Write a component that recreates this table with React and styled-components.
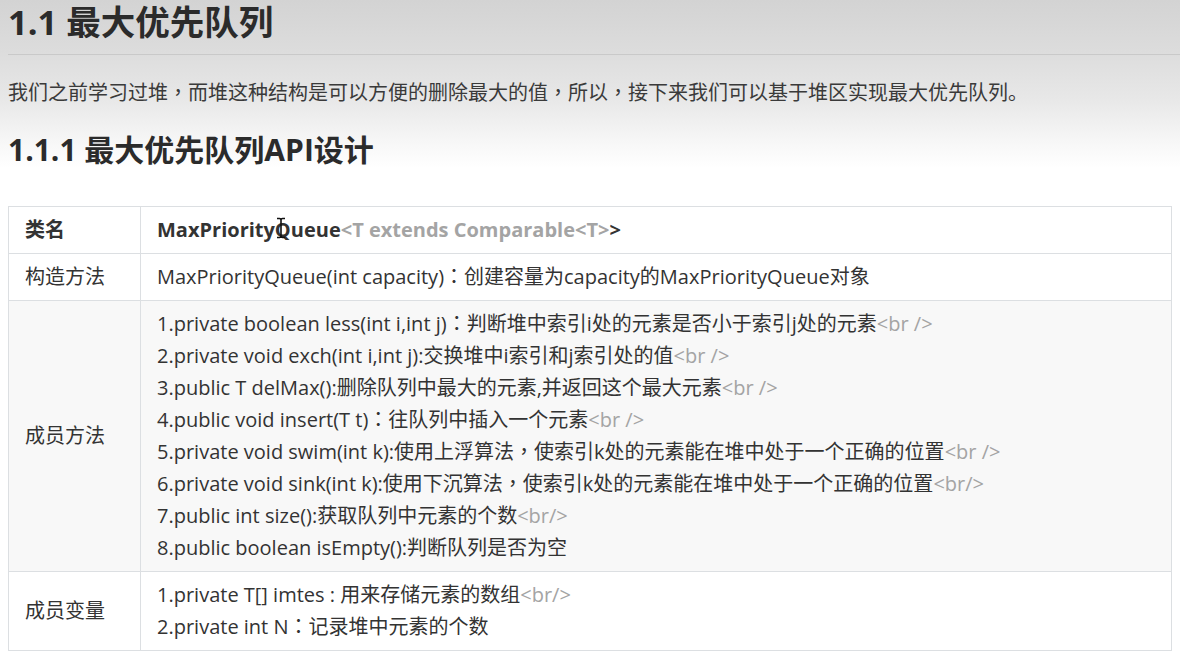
import React from "react";
import styled, { createGlobalStyle } from "styled-components";

const Global = createGlobalStyle`
  html, body {
    margin: 0;
    padding: 0;
    background: #fff;
  }
  body {
    font-family: "Open Sans", "Noto Sans CJK SC", sans-serif;
    color: #333;
  }
`;

const Page = styled.div`
  width: 1180px;
  height: 657px;
  box-sizing: border-box;
  padding: 0 8px;
  overflow: hidden;
  position: relative;
  background: linear-gradient(
    to bottom,
    #d3d3d3 0px,
    #dcdcdc 50px,
    #e8e8e8 100px,
    #f6f6f6 140px,
    #ffffff 168px
  );
`;

const H1 = styled.h1`
  margin: 0 -8px 0 0;
  padding: 0 0 10px 0;
  font-size: 34.5px;
  line-height: 44px;
  font-weight: 700;
  color: #2b2b2b;
  border-bottom: 1px solid #c9c9c9;
`;

const Para = styled.p`
  margin: 22px 0 21px;
  font-size: 20px;
  line-height: 32px;
  color: #3a3a3a;
`;

const H2 = styled.h2`
  margin: 0 0 36px;
  font-size: 30px;
  line-height: 40px;
  font-weight: 700;
  color: #2b2b2b;
`;

const Table = styled.table`
  width: 100%;
  border-collapse: collapse;
  table-layout: fixed;
  font-size: 20px;
  line-height: 32px;
  color: #333;
`;

const Row = styled.tr`
  background: ${(p) => (p.$shaded ? "#f8f8f8" : "#fff")};
`;

const Cell = styled.td`
  box-sizing: border-box;
  border: 1px solid #dcdfe2;
  padding: 7px 16px;
  vertical-align: middle;
  font-weight: ${(p) => (p.$bold ? 700 : 400)};
  width: ${(p) => p.$w || "auto"};
  white-space: nowrap;
`;

const Tag = styled.span`
  color: #a4a4a4;
`;

const Punct = styled.span`
  font-family: "Noto Sans CJK TC", sans-serif;
  line-height: 1;
`;

const Line = styled.div`
  display: block;
  height: 32px;
  overflow: visible;
`;

const Cursor = styled.svg`
  position: absolute;
  left: 275px;
  top: 217px;
  width: 12px;
  height: 22px;
`;

function T({ children }) {
  const parts = String(children).split(/([：，])/);
  return (
    <>
      {parts.map((p, i) =>
        p === "：" || p === "，" ? <Punct key={i}>{p}</Punct> : p
      )}
    </>
  );
}

const methods = [
  ["1.private boolean less(int i,int j)：判断堆中索引i处的元素是否小于索引j处的元素", "<br />"],
  ["2.private void exch(int i,int j):交换堆中i索引和j索引处的值", "<br />"],
  ["3.public T delMax():删除队列中最大的元素,并返回这个最大元素", "<br />"],
  ["4.public void insert(T t)：往队列中插入一个元素", "<br />"],
  ["5.private void swim(int k):使用上浮算法，使索引k处的元素能在堆中处于一个正确的位置", "<br />"],
  ["6.private void sink(int k):使用下沉算法，使索引k处的元素能在堆中处于一个正确的位置", "<br/>"],
  ["7.public int size():获取队列中元素的个数", "<br/>"],
  ["8.public boolean isEmpty():判断队列是否为空", ""],
];

export default function App() {
  return (
    <>
      <Global />
      <Page>
        <H1>1.1 最大优先队列</H1>
        <Para>
          <T>我们之前学习过堆，而堆这种结构是可以方便的删除最大的值，所以，接下来我们可以基于堆区实现最大优先队列。</T>
        </Para>
        <H2>1.1.1 最大优先队列API设计</H2>
        <Table>
          <tbody>
            <Row>
              <Cell $bold $w="132px">
                <Line>类名</Line>
              </Cell>
              <Cell $bold>
                <Line>
                  MaxPriorityQueue<Tag>&lt;T extends Comparable&lt;T&gt;</Tag>&gt;
                </Line>
              </Cell>
            </Row>
            <Row>
              <Cell>
                <Line>构造方法</Line>
              </Cell>
              <Cell>
                <Line>
                  <T>MaxPriorityQueue(int capacity)：创建容量为capacity的MaxPriorityQueue对象</T>
                </Line>
              </Cell>
            </Row>
            <Row $shaded>
              <Cell>
                <Line>成员方法</Line>
              </Cell>
              <Cell>
                {methods.map(([t, br]) => (
                  <Line key={t}>
                    <T>{t}</T>
                    {br && <Tag>{br}</Tag>}
                  </Line>
                ))}
              </Cell>
            </Row>
            <Row>
              <Cell>
                <Line>成员变量</Line>
              </Cell>
              <Cell>
                <Line>
                  1.private T[] imtes : 用来存储元素的数组<Tag>&lt;br/&gt;</Tag>
                </Line>
                <Line>
                  <T>2.private int N：记录堆中元素的个数</T>
                </Line>
              </Cell>
            </Row>
          </tbody>
        </Table>
        <Cursor viewBox="0 0 12 22">
          <path
            d="M2 1.5 H4.5 Q6 1.5 6 3 Q6 1.5 7.5 1.5 H10 M6 3 V19 M2 20.5 H4.5 Q6 20.5 6 19 Q6 20.5 7.5 20.5 H10"
            fill="none"
            stroke="#111"
            strokeWidth="1.6"
          />
        </Cursor>
      </Page>
    </>
  );
}
